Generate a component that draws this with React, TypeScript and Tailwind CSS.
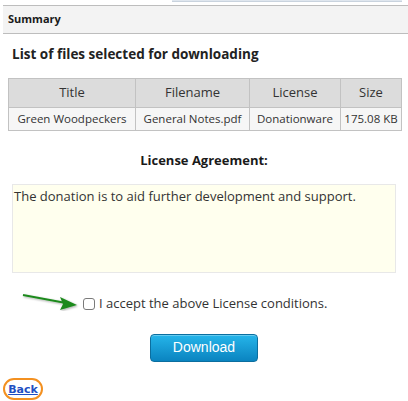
import React from "react";

export default function App() {
  const font = { fontFamily: '"Open Sans", "Noto Sans", sans-serif' };
  return (
    <div className="w-[408px] h-[401px] bg-white relative overflow-hidden text-[#222]" style={font}>
      <div className="ml-[172px] w-[230px] h-[2px] bg-[#dfe6ee] border-b border-[#c9d3de]" />
      <div className="mt-[3px] ml-[3px] h-[29px] bg-[#f3f3f3] border-y border-[#bdbdbd] flex items-center pl-[5px]">
        <span className="text-[11px] font-bold text-[#1a1a1a]">Summary</span>
      </div>
      <div className="mt-[10px] ml-[12px] text-[13.5px] font-bold leading-[20px]">List of files selected for downloading</div>
      <div className="mt-[14px] mx-[8px]">
        <table className="w-[394px] border-collapse text-[#333]">
          <thead>
            <tr className="bg-[#dcdcdc] h-[29px]">
              <th className="border border-[#c2c2c2] font-normal text-[13px] w-[127px]">Title</th>
              <th className="border border-[#c2c2c2] font-normal text-[13px] w-[114px]">Filename</th>
              <th className="border border-[#c2c2c2] font-normal text-[13px] w-[91px]">License</th>
              <th className="border border-[#c2c2c2] font-normal text-[13px]">Size</th>
            </tr>
          </thead>
          <tbody>
            <tr className="bg-[#f6f6f6] h-[23px] text-[11.5px]">
              <td className="border border-[#c2c2c2] text-center whitespace-nowrap">Green Woodpeckers</td>
              <td className="border border-[#c2c2c2] text-center whitespace-nowrap">General Notes.pdf</td>
              <td className="border border-[#c2c2c2] text-center whitespace-nowrap">Donationware</td>
              <td className="border border-[#c2c2c2] text-center whitespace-nowrap">175.08 KB</td>
            </tr>
          </tbody>
        </table>
      </div>
      <div className="mt-[20px] text-center text-[13px] font-bold leading-[18px] text-[#1a1a1a]">License Agreement:</div>
      <div className="mt-[15px] mx-[12px] h-[89px] bg-[#ffffee] border border-[#e8e8e8] px-[1px] pt-[2px] text-[13px] leading-[18px] text-[#333]">
        The donation is to aid further development and support.
      </div>
      <div className="mt-[21px] flex items-center">
        <svg width="62" height="20" viewBox="0 0 62 20" className="ml-[22px] mt-[-6px]">
          <defs>
            <filter id="sh" x="-20%" y="-50%" width="140%" height="200%">
              <feDropShadow dx="1" dy="1" stdDeviation="1" floodColor="#000" floodOpacity="0.35" />
            </filter>
          </defs>
          <g filter="url(#sh)">
            <line x1="1" y1="4" x2="44" y2="12" stroke="#1f8a1f" strokeWidth="2" />
            <polygon points="55,14 38,6 41,13 38,19" fill="#1f8a1f" />
          </g>
        </svg>
        <span className="ml-[-1px] w-[12px] h-[12px] border border-[#7a7a7a] rounded-[3px] bg-white" />
        <span className="ml-[4px] text-[13px] text-[#333]">I accept the above License conditions.</span>
      </div>
      <div className="mt-[20px] flex justify-center">
        <button
          className="w-[108px] h-[28px] rounded-[4px] border border-[#0b6e9f] text-white text-[14px] bg-gradient-to-b from-[#25b5ea] to-[#0a84c0] shadow-[inset_0_1px_0_rgba(255,255,255,0.3)]"
          style={{ fontFamily: '"Liberation Sans", Arial, sans-serif' }}
        >
          Download
        </button>
      </div>
      <div className="absolute left-[3px] top-[378px] w-[40px] h-[22px] rounded-full border-[2.5px] border-[#f39020] flex items-center justify-center">
        <a
          href="#"
          className="text-[11px] font-bold text-[#1f4fc2] underline leading-none"
          style={{ fontFamily: '"DejaVu Sans", Verdana, sans-serif' }}
        >
          Back
        </a>
      </div>
    </div>
  );
}
